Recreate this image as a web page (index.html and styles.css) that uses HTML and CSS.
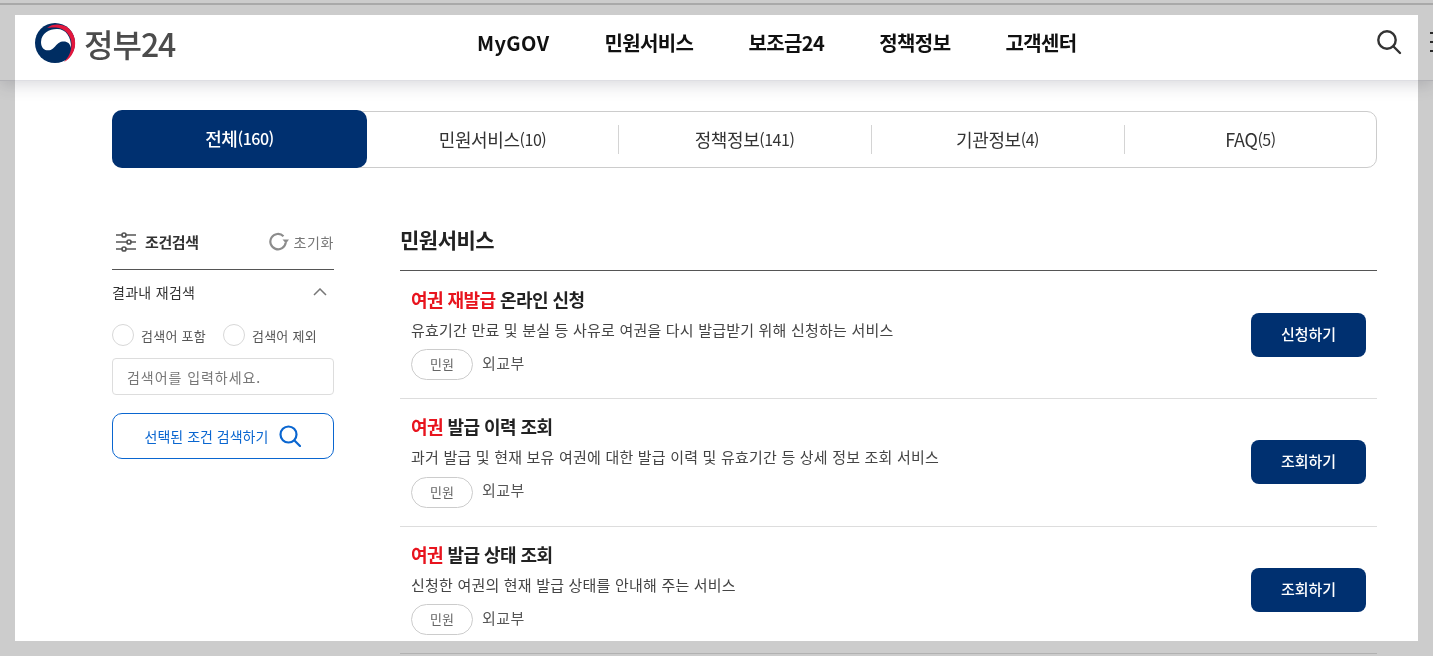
FILE: index.html
```html
<!DOCTYPE html>
<html lang="ko">
<head>
<meta charset="utf-8">
<title>정부24 검색</title>
<link rel="stylesheet" href="styles.css">
</head>
<body>
<div class="page">
  <header class="header">
    <a class="logo">
      <svg class="logo-mark" width="42" height="42" viewBox="0 0 42 42">
        <circle cx="21" cy="21" r="20" fill="#002d62"/>
        <path d="M13 6C18 1.500 27 1.500 33 5 39 9 42 17 41 24 40 31 36 37 30 40 35 35 37.500 29 37.500 22 37.500 13 30 6 22 5.500 18 5.300 15 5.500 13 6Z" fill="#e2173d"/>
        <path d="M7 20C7.500 11 15 7 23 7 32 7 37.500 15 37 26 36 21 33 19 28.500 19.500 24 20 22 24 19 26.500 15 30 7 29 7 20Z" fill="#fff"/>
      </svg>
      <span class="logo-text">정부24</span>
    </a>
    <nav class="nav">
      <a class="nav-en">MyGOV</a>
      <a>민원서비스</a>
      <a>보조금24</a>
      <a>정책정보</a>
      <a>고객센터</a>
    </nav>
    <svg class="head-search" width="26" height="26" viewBox="0 0 26 26" fill="none" stroke="#333" stroke-width="2.400">
      <circle cx="11" cy="11" r="8.700"/>
      <path d="M17.500 17.500L24 24" stroke-linecap="round"/>
    </svg>
    <div class="burger"><i></i><i></i><i></i></div>
  </header>

  <div class="content">
    <div class="tabs">
      <a class="tab active">전체<small>(160)</small></a>
      <a class="tab">민원서비스<small>(10)</small></a>
      <a class="tab sep">정책정보<small>(141)</small></a>
      <a class="tab sep">기관정보<small>(4)</small></a>
      <a class="tab sep">FAQ<small>(5)</small></a>
    </div>

    <div class="columns">
      <aside class="side">
        <div class="side-head">
          <svg class="filter-icon" width="22" height="22" viewBox="0 0 22 22" fill="#fff" stroke="#555" stroke-width="1.700">
            <path d="M1 4H21M1 11H21M1 18H21"/>
            <circle cx="9" cy="4" r="2"/><circle cx="14" cy="11" r="2"/><circle cx="9" cy="18" r="2"/>
          </svg>
          <strong class="side-title">조건검색</strong>
          <a class="reset">
            <svg width="20" height="20" viewBox="0 0 20 20" fill="none" stroke="#8c8c8c" stroke-width="2.200">
              <path d="M14.500 4.200A7.700 7.700 0 1 0 16.700 10.500"/>
              <path d="M13.500 7.500H20L17 11.500Z" fill="#8c8c8c" stroke="none"/>
            </svg>
            <span>초기화</span>
          </a>
        </div>
        <div class="refine-head">
          <span>결과내 재검색</span>
          <svg width="14" height="8" viewBox="0 0 14 8" fill="none" stroke="#777" stroke-width="1.500"><path d="M1 7L7 1L13 7"/></svg>
        </div>
        <div class="radios">
          <label class="radio"><i></i>검색어 포함</label>
          <label class="radio"><i></i>검색어 제외</label>
        </div>
        <div class="input">검색어를 입력하세요.</div>
        <a class="side-btn">선택된 조건 검색하기
          <svg width="22" height="22" viewBox="0 0 22 22" fill="none" stroke="#0a66d0" stroke-width="2.200">
            <circle cx="9.500" cy="9.500" r="8"/>
            <path d="M15.500 15.500L21 21" stroke-linecap="round"/>
          </svg>
        </a>
      </aside>

      <main class="main">
        <h2 class="main-title">민원서비스</h2>
        <ul class="list">
          <li class="row">
            <div class="row-body">
              <p class="row-title"><em>여권 재발급</em> 온라인 신청</p>
              <p class="row-desc">유효기간 만료 및 분실 등 사유로 여권을 다시 발급받기 위해 신청하는 서비스</p>
              <p class="row-meta"><span class="tag">민원</span><span class="org">외교부</span></p>
            </div>
            <a class="row-btn">신청하기</a>
          </li>
          <li class="row">
            <div class="row-body">
              <p class="row-title"><em>여권</em> 발급 이력 조회</p>
              <p class="row-desc">과거 발급 및 현재 보유 여권에 대한 발급 이력 및 유효기간 등 상세 정보 조회 서비스</p>
              <p class="row-meta"><span class="tag">민원</span><span class="org">외교부</span></p>
            </div>
            <a class="row-btn">조회하기</a>
          </li>
          <li class="row">
            <div class="row-body">
              <p class="row-title"><em>여권</em> 발급 상태 조회</p>
              <p class="row-desc">신청한 여권의 현재 발급 상태를 안내해 주는 서비스</p>
              <p class="row-meta"><span class="tag">민원</span><span class="org">외교부</span></p>
            </div>
            <a class="row-btn">조회하기</a>
          </li>
        </ul>
      </main>
    </div>
  </div>
</div>
<div class="frame"></div>
</body>
</html>
```

FILE: styles.css
```css
* { box-sizing: border-box; }
html, body { margin: 0; height: 656px; overflow: hidden; background: #fff; }
body {
  position: relative;
  font-family: "Noto Sans CJK KR", "Noto Sans", sans-serif;
  color: #222;
}
a { color: inherit; text-decoration: none; }
p, ul, h2 { margin: 0; padding: 0; }
ul { list-style: none; }

.frame {
  position: absolute;
  inset: 0;
  border: 15px solid #ccc;
  mix-blend-mode: multiply;
  pointer-events: none;
}

.header {
  height: 81px;
  display: flex;
  align-items: center;
  position: relative;
  background: #fff;
  border-top: 3px solid #fff;
  border-bottom: 1px solid #dedee3;
  box-shadow: 0 3px 16px rgba(50, 50, 70, .2);
  padding: 2px 0 0 34px;
}
.header::before {
  content: "";
  position: absolute;
  left: 0; right: 0; top: 0;
  height: 2px;
  background: #d4d4d4;
}
.logo { display: flex; align-items: center; gap: 8px; width: 443px; }
.logo-mark { flex: none; }
.logo-text {
  font-size: 32px;
  font-weight: 500;
  line-height: 42px;
  color: #4c4c4c;
  letter-spacing: -1px;
}
.nav { display: flex; gap: 55px; font-size: 20px; font-weight: 700; color: #111; letter-spacing: -.6px; }
.nav-en { letter-spacing: .4px; }
.head-search { position: absolute; left: 1376px; top: 26px; }
.burger { position: absolute; left: 1430px; top: 29px; display: flex; flex-direction: column; gap: 7px; }
.burger i { display: block; width: 6px; height: 2px; background: #333; }

.content { padding: 30px 56px 0 112px; }

.tabs {
  display: grid;
  grid-template-columns: 254px 251px 253px 253px 253px;
  height: 57px;
  border: 1px solid #ccc;
  border-radius: 10px;
}
.tab {
  display: flex;
  align-items: center;
  justify-content: center;
  padding-bottom: 2px;
  font-size: 18px;
  letter-spacing: -.4px;
  color: #333;
  position: relative;
}
.tab small { font-size: 16px; letter-spacing: -.5px; }
.tab.sep::before {
  content: "";
  position: absolute;
  left: 0; top: 13px; bottom: 13px;
  width: 1px;
  background: #d4d4d4;
}
.tab.active {
  margin: -2px 0 -1px -1px;
  background: #003070;
  color: #fff;
  border-radius: 10px;
  font-weight: 500;
}

.columns { display: grid; grid-template-columns: 222px 1fr; gap: 66px; margin-top: 56px; }

.side-head {
  height: 46px;
  display: flex;
  align-items: center;
  border-bottom: 1px solid #555;
  padding: 0 0 10px 3px;
}
.side-title { margin-left: 8px; font-size: 15px; font-weight: 700; letter-spacing: -.4px; color: #333; }
.reset { margin-left: auto; display: flex; align-items: center; gap: 5px; font-size: 14px; color: #777; letter-spacing: .6px; }
.refine-head {
  display: flex;
  justify-content: space-between;
  align-items: center;
  height: 44px;
  padding-right: 7px;
  font-size: 14px;
  letter-spacing: .3px;
  color: #333;
}
.radios { display: flex; gap: 17px; margin-top: 10px; }
.radio { display: flex; align-items: center; gap: 7px; font-size: 13px; color: #555; letter-spacing: .25px; }
.radio i { width: 22px; height: 22px; border: 1px solid #d8d8d8; border-radius: 50%; }
.input {
  height: 37px;
  margin-top: 12px;
  padding-left: 14px;
  border: 1px solid #ddd;
  border-radius: 4px;
  font-size: 14px;
  line-height: 36px;
  color: #777;
  letter-spacing: .95px;
}
.side-btn {
  height: 46px;
  margin-top: 18px;
  display: flex;
  align-items: center;
  justify-content: center;
  gap: 11px;
  border: 1px solid #0a66d0;
  border-radius: 10px;
  font-size: 14px;
  line-height: 20px;
  padding-bottom: 1px;
  color: #0a66d0;
}

.main-title {
  height: 47px;
  border-bottom: 1px solid #555;
  font-size: 21px;
  font-weight: 700;
  line-height: 30px;
  letter-spacing: -.5px;
  color: #222;
}
.list { margin-top: .7px; }
.row {
  height: 127.500px;
  display: flex;
  align-items: center;
  justify-content: space-between;
  border-bottom: 1px solid #ddd;
  padding: 0 11px;
}
.row-title { font-size: 18px; font-weight: 700; line-height: 26px; letter-spacing: -.55px; color: #222; margin-top: -4px; }
.row-title em { font-style: normal; color: #e8141e; }
.row-desc { font-size: 15px; line-height: 24px; color: #444; letter-spacing: .2px; margin-top: 6px; }
.row-meta { display: flex; align-items: center; gap: 9px; margin-top: 7.300px; }
.tag {
  width: 62px;
  height: 31px;
  border: 1px solid #ccc;
  border-radius: 16px;
  font-size: 13px;
  line-height: 27px;
  text-align: center;
  color: #666;
}
.org { font-size: 15px; color: #555; letter-spacing: .5px; margin-top: -5px; }
.row-btn {
  flex: none;
  width: 115px;
  height: 44px;
  border-radius: 8px;
  background: #003070;
  color: #fff;
  font-size: 15px;
  font-weight: 500;
  line-height: 42px;
  text-align: center;
}
```
